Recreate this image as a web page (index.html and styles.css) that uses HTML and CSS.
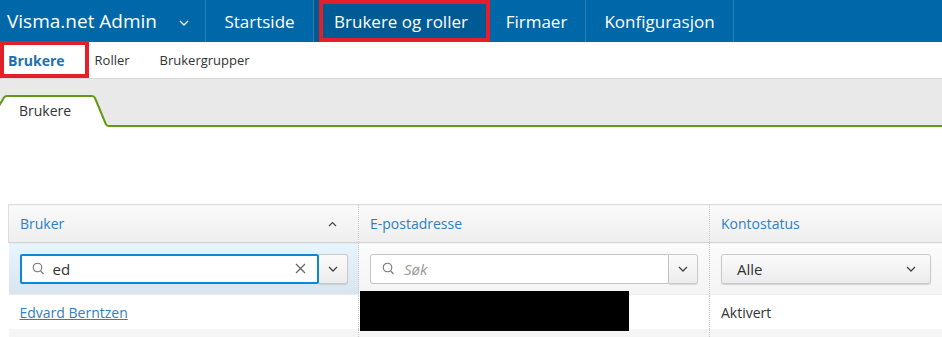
FILE: index.html
```html
<!DOCTYPE html>
<html lang="no">
<head>
<meta charset="UTF-8">
<title>Visma.net Admin - Brukere</title>
<link rel="stylesheet" href="styles.css">
</head>
<body>

<div class="topbar">
  <div class="brand">
    <span>Visma.net Admin</span>
    <svg class="brand-caret" width="10" height="6" viewBox="0 0 10 6"><polyline points="1,1 5,5 9,1" fill="none" stroke="#fff" stroke-width="1.3"/></svg>
  </div>
  <a href="#" class="nav-item nav-start">Startside</a>
  <a href="#" class="nav-item nav-users active">Brukere og roller<span class="mark mark-nav"></span></a>
  <a href="#" class="nav-item nav-firms">Firmaer</a>
  <a href="#" class="nav-item nav-config">Konfigurasjon</a>
</div>

<div class="subnav">
  <a href="#" class="sub-item current">Brukere</a>
  <a href="#" class="sub-item">Roller</a>
  <a href="#" class="sub-item">Brukergrupper</a>
  <span class="mark mark-sub"></span>
</div>

<div class="tabstrip">
  <div class="tab">
    <svg class="tab-shape" width="130" height="32" viewBox="0 0 130 32">
      <path d="M0,10 L4,2.5 Q5,1 7,1 L92,1 Q94,1 95,3 L106,29.5 Q107,31 109,31 L109,32 L0,32 Z" fill="#fff"/>
      <path d="M-1,11 L4,2.5 Q5,1 7,1 L92,1 Q94,1 95,3 L106,29.5 Q107,31 109,31 L130,31" fill="none" stroke="#5f9a12" stroke-width="2"/>
    </svg>
    <span class="tab-label">Brukere</span>
  </div>
</div>

<div class="content">
  <table class="grid">
    <colgroup>
      <col style="width:350px">
      <col style="width:351px">
      <col>
    </colgroup>
    <thead>
      <tr class="head-row">
        <th class="sorted-head">Bruker
          <svg class="sort" width="9" height="6" viewBox="0 0 9 6"><polyline points="1,5 4.5,1.5 8,5" fill="none" stroke="#444" stroke-width="1.2"/></svg>
        </th>
        <th>E-postadresse</th>
        <th>Kontostatus</th>
      </tr>
      <tr class="filter-row">
        <td class="sorted-filter">
          <div class="combo">
            <div class="search focus">
              <svg class="lens" width="13" height="13" viewBox="0 0 13 13"><circle cx="5.5" cy="5.5" r="4.3" fill="none" stroke="#777" stroke-width="1.1"/><line x1="8.6" y1="8.8" x2="11.5" y2="12" stroke="#777" stroke-width="1.2"/></svg>
              <span class="value">ed</span>
              <svg class="clear" width="11" height="11" viewBox="0 0 11 11"><line x1="1" y1="1" x2="10" y2="10" stroke="#666" stroke-width="1.2"/><line x1="10" y1="1" x2="1" y2="10" stroke="#666" stroke-width="1.2"/></svg>
            </div>
            <div class="drop">
              <svg width="10" height="6" viewBox="0 0 10 6"><polyline points="1,1 5,5 9,1" fill="none" stroke="#444" stroke-width="1.3"/></svg>
            </div>
          </div>
        </td>
        <td>
          <div class="combo">
            <div class="search">
              <svg class="lens" width="13" height="13" viewBox="0 0 13 13"><circle cx="5.5" cy="5.5" r="4.3" fill="none" stroke="#777" stroke-width="1.1"/><line x1="8.6" y1="8.8" x2="11.5" y2="12" stroke="#777" stroke-width="1.2"/></svg>
              <span class="placeholder">Søk</span>
            </div>
            <div class="drop">
              <svg width="10" height="6" viewBox="0 0 10 6"><polyline points="1,1 5,5 9,1" fill="none" stroke="#444" stroke-width="1.3"/></svg>
            </div>
          </div>
        </td>
        <td>
          <div class="select">
            <span>Alle</span>
            <svg width="10" height="6" viewBox="0 0 10 6"><polyline points="1,1 5,5 9,1" fill="none" stroke="#444" stroke-width="1.3"/></svg>
          </div>
        </td>
      </tr>
    </thead>
    <tbody>
      <tr class="data-row">
        <td><a href="#" class="user-link">Edvard Berntzen</a></td>
        <td class="mail-cell"><span class="redact"></span></td>
        <td>Aktivert</td>
      </tr>
      <tr class="data-row alt">
        <td></td>
        <td></td>
        <td></td>
      </tr>
    </tbody>
  </table>
</div>

</body>
</html>
```

FILE: styles.css
```css
/* Page */
body {
  margin: 0;
  font-family: "Open Sans", "Liberation Sans", sans-serif;
  color: #333;
  overflow: hidden;
}

a {
  text-decoration: none;
  color: inherit;
}

/* Red annotation frames */
.mark {
  position: absolute;
  border: 4px solid #e3202a;
  box-sizing: border-box;
}

/* Top bar */
.topbar {
  display: flex;
  height: 42px;
  background-color: #0068a9;
  color: #fff;
}

.brand {
  display: flex;
  align-items: center;
  width: 198px;
  padding-left: 7px;
  font-size: 19px;
  border-right: 1px solid #2a7db6;
}

.brand-caret {
  margin-left: 22px;
  margin-top: 3px;
}

.nav-item {
  position: relative;
  display: flex;
  align-items: center;
  justify-content: center;
  box-sizing: border-box;
  font-size: 17px;
  border-right: 1px solid #2a7db6;
}

.nav-start { width: 108px; }
.nav-users { width: 176px; }
.nav-firms { width: 96px; padding-right: 2px; }
.nav-config { width: 148px; }

.nav-item.active {
  background-color: #005b95;
  padding-right: 2px;
  border-right: none;
}

.mark-nav {
  top: 0;
  left: 5px;
  right: 0;
  bottom: 0;
}

/* Second level navigation */
.subnav {
  position: relative;
  display: flex;
  align-items: center;
  height: 36px;
  border-bottom: 1px solid #dadada;
  font-size: 13px;
}

.sub-item {
  padding: 0 15px;
  color: #333;
}

.sub-item.current {
  padding-left: 8px;
  font-weight: bold;
  font-size: 14px;
  color: #1f6fae;
}

.mark-sub {
  top: -1px;
  left: 0;
  width: 89px;
  bottom: 0;
}

/* Tab strip */
.tabstrip {
  height: 48px;
  box-sizing: border-box;
  padding-top: 16px;
  background-color: #e9e9e9;
  border-bottom: 2px solid #5f9a12;
}

.tab {
  position: relative;
  height: 32px;
  width: 110px;
}

.tab-shape {
  position: absolute;
  top: 0;
  left: 0;
}

.tab-label {
  position: relative;
  display: block;
  padding: 6px 0 0 19px;
  font-size: 14px;
  color: #333;
}

/* Grid */
.content {
  padding: 77px 0 0 8px;
}

.grid {
  width: 934px;
  table-layout: fixed;
  border-collapse: collapse;
  font-size: 14px;
}

.grid th,
.grid td {
  padding: 0 0 0 11px;
  text-align: left;
  vertical-align: middle;
}

.grid th + th,
.grid td + td {
  border-left: 1px dotted #c9c9c9;
}

.head-row th {
  height: 37px;
  font-weight: normal;
  color: #2f7fc0;
  background: linear-gradient(#fafafa, #eeeeee);
  border-top: 1px solid #dddddd;
  border-bottom: 1px solid #d2d2d2;
}

.head-row th:first-child {
  border-left: 1px solid #dddddd;
}

.sorted-head {
  position: relative;
}

.sort {
  position: absolute;
  right: 21px;
  top: 16px;
}

.filter-row td {
  height: 51px;
  background: linear-gradient(#fbfbfb, #f4f4f4);
  border-bottom: 1px solid #ededed;
}

.filter-row td.sorted-filter {
  background: linear-gradient(#e9f5fd, #d8e5ee);
}

/* Filter controls */
.combo {
  display: flex;
  width: 328px;
  height: 30px;
}

.search {
  flex: 1;
  display: flex;
  align-items: center;
  box-sizing: border-box;
  padding: 0 10px 0 11px;
  background-color: #fff;
  border: 1px solid #c6c6c6;
  border-radius: 3px 0 0 3px;
  font-size: 15px;
}

.search.focus {
  border: 2px solid #0d87da;
  border-radius: 2px;
  padding-left: 10px;
}

.lens {
  margin-right: 8px;
}

.value {
  flex: 1;
  color: #333;
}

.placeholder {
  color: #999;
  font-style: italic;
  margin-left: 1px;
}

.clear {
  margin-right: 1px;
}

.drop {
  display: flex;
  align-items: center;
  justify-content: center;
  width: 29px;
  box-sizing: border-box;
  background: linear-gradient(#fbfbfb, #ececec);
  border: 1px solid #c9c9c9;
  border-left: none;
  border-radius: 0 3px 3px 0;
  box-shadow: 0 1px 1px rgba(0, 0, 0, 0.12);
}

.select {
  display: flex;
  align-items: center;
  justify-content: space-between;
  width: 210px;
  height: 30px;
  box-sizing: border-box;
  padding: 0 14px 0 15px;
  background: linear-gradient(#fbfbfb, #ececec);
  border: 1px solid #c9c9c9;
  border-radius: 3px;
  box-shadow: 0 1px 1px rgba(0, 0, 0, 0.15);
  font-size: 15px;
}

/* Rows */
.data-row td {
  height: 34px;
  background-color: #fff;
}

.data-row.alt td {
  background-color: #f5f5f5;
}

.user-link {
  color: #2f7fc0;
  text-decoration: underline;
}

.mail-cell {
  position: relative;
}

.redact {
  position: absolute;
  left: 1px;
  top: -4px;
  width: 269px;
  height: 40px;
  background-color: #000;
}
```
